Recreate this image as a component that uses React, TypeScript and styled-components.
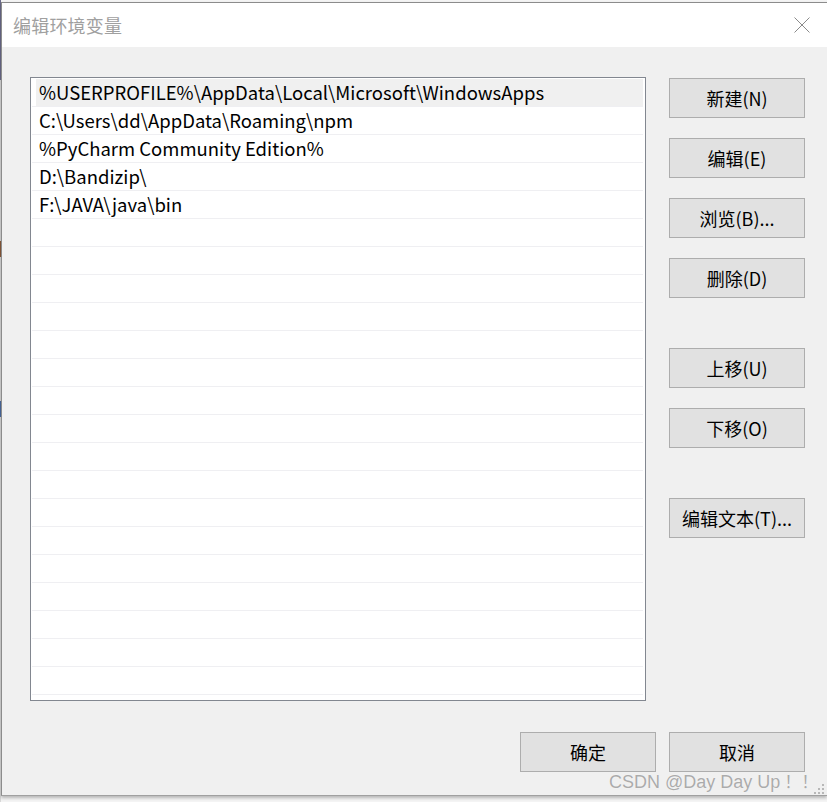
import React from "react";
import styled, { createGlobalStyle } from "styled-components";

const Global = createGlobalStyle`
  html, body { margin: 0; padding: 0; }
  body {
    width: 827px; height: 802px; overflow: hidden;
    background: #c8c8c8;
    font-family: "Noto Sans CJK SC", "Noto Sans", sans-serif;
  }
`;

const Page = styled.div`
  display: flex;
  width: 827px;
  height: 802px;
  background: #f4f4f4;
`;

const BackStrip = styled.div`
  width: 1px;
  flex: none;
  background: linear-gradient(#6a6a8a 0 10%, #d8d8d8 10% 30%, #8a5a3a 30% 32%, #d8d8d8 32% 50%, #4a6aa0 50% 52%, #d8d8d8 52%);
`;

const Dialog = styled.div`
  position: relative;
  margin-top: 2px;
  width: 826px;
  height: 794px;
  display: flex;
  flex-direction: column;
  border-top: 1px solid #8c8c8c;
  border-left: 1px solid #8c8c8c;
  border-bottom: 1px solid #a0a0a0;
  box-shadow: 0 2px 3px rgba(0, 0, 0, 0.25);
  box-sizing: border-box;
  background: #f0f0f0;
`;

const TitleBar = styled.div`
  height: 44px;
  flex: none;
  background: #ffffff;
  display: flex;
  align-items: center;
  justify-content: space-between;
  padding: 0 17px 0 11px;
`;

const Title = styled.span`
  font-size: 18px;
  color: #a0a0a0;
  letter-spacing: 0.2px;
`;

const CloseIcon = styled.svg`
  width: 16px;
  height: 16px;
  display: block;
`;

const Body = styled.div`
  flex: 1;
  display: flex;
  flex-direction: column;
  padding: 30px 0 0 28px;
`;

const TopRow = styled.div`
  display: flex;
  gap: 23px;
`;

const ListBox = styled.div`
  width: 616px;
  height: 624px;
  box-sizing: border-box;
  border: 1px solid #828790;
  background: #ffffff;
  padding: 1px 2px 0 1px;
  overflow: hidden;
`;

const Row = styled.div<{ $selected?: boolean }>`
  height: 28px;
  box-sizing: border-box;
  border-bottom: 1px solid #efeff2;
  display: flex;
  align-items: center;
  padding: 0 0 2px 7px;
  font-size: 18.5px;
  color: #000;
  white-space: nowrap;
  background: ${(p) => (p.$selected ? "linear-gradient(90deg, #ffffff 0 4px, #f0f0f0 4px)" : "#ffffff")};
`;

const ButtonColumn = styled.div`
  display: flex;
  flex-direction: column;
  padding-top: 1px;
`;

const Button = styled.div<{ $gap?: number }>`
  width: 136px;
  height: 40px;
  box-sizing: border-box;
  margin-top: ${(p) => p.$gap ?? 0}px;
  border: 1px solid #adadad;
  background: #e1e1e1;
  display: flex;
  align-items: center;
  justify-content: center;
  font-size: 18px;
  color: #000;
  white-space: nowrap;
`;

const Footer = styled.div`
  display: flex;
  justify-content: flex-end;
  gap: 13px;
  margin-top: 31px;
  width: 775px;
`;

const Watermark = styled.div`
  position: absolute;
  left: 607px;
  top: 765px;
  display: flex;
  align-items: baseline;
  font-family: "Liberation Sans", "Noto Sans CJK SC", sans-serif;
  font-size: 18px;
  color: #ababab;
  text-shadow: 0 0 1px #ffffff;
  white-space: nowrap;
`;

const Bang = styled.span<{ $lead?: number }>`
  font-family: "Noto Sans CJK SC", sans-serif;
  font-size: 17px;
  width: 17px;
  margin-left: ${(p) => p.$lead ?? 0}px;
  overflow: hidden;
  text-align: center;
`;

const Grip = styled.svg`
  position: absolute;
  right: 2px;
  bottom: 0px;
  width: 13px;
  height: 13px;
`;

const rows = [
  "%USERPROFILE%\\AppData\\Local\\Microsoft\\WindowsApps",
  "C:\\Users\\dd\\AppData\\Roaming\\npm",
  "%PyCharm Community Edition%",
  "D:\\Bandizip\\",
  "F:\\JAVA\\java\\bin",
];

const buttons: { label: string; gap: number }[] = [
  { label: "新建(N)", gap: 0 },
  { label: "编辑(E)", gap: 20 },
  { label: "浏览(B)...", gap: 20 },
  { label: "删除(D)", gap: 20 },
  { label: "上移(U)", gap: 50 },
  { label: "下移(O)", gap: 20 },
  { label: "编辑文本(T)...", gap: 50 },
];

export default function App() {
  const all = [...rows, ...Array(18).fill("")];
  return (
    <>
      <Global />
      <Page>
        <BackStrip />
        <Dialog>
          <TitleBar>
            <Title>编辑环境变量</Title>
            <CloseIcon viewBox="0 0 16 16">
              <path d="M0.5 0.5 L15.5 15.5 M15.5 0.5 L0.5 15.5" stroke="#8a8a8a" strokeWidth="1" fill="none" />
            </CloseIcon>
          </TitleBar>
          <Body>
            <TopRow>
              <ListBox>
                {all.map((t, i) => (
                  <Row key={i} $selected={i === 0}>
                    {t}
                  </Row>
                ))}
              </ListBox>
              <ButtonColumn>
                {buttons.map((b) => (
                  <Button key={b.label} $gap={b.gap}>
                    {b.label}
                  </Button>
                ))}
              </ButtonColumn>
            </TopRow>
            <Footer>
              <Button>确定</Button>
              <Button>取消</Button>
            </Footer>
          </Body>
          <Watermark>
            CSDN @Day Day Up<Bang $lead={4}>！</Bang>
            <Bang>！</Bang>
          </Watermark>
          <Grip viewBox="0 0 13 13">
            {[
              [10, 2],
              [6, 6],
              [10, 6],
              [2, 10],
              [6, 10],
              [10, 10],
            ].map(([x, y], i) => (
              <rect key={i} x={x} y={y} width="2" height="2" fill="#b8b8b8" />
            ))}
          </Grip>
        </Dialog>
      </Page>
    </>
  );
}
